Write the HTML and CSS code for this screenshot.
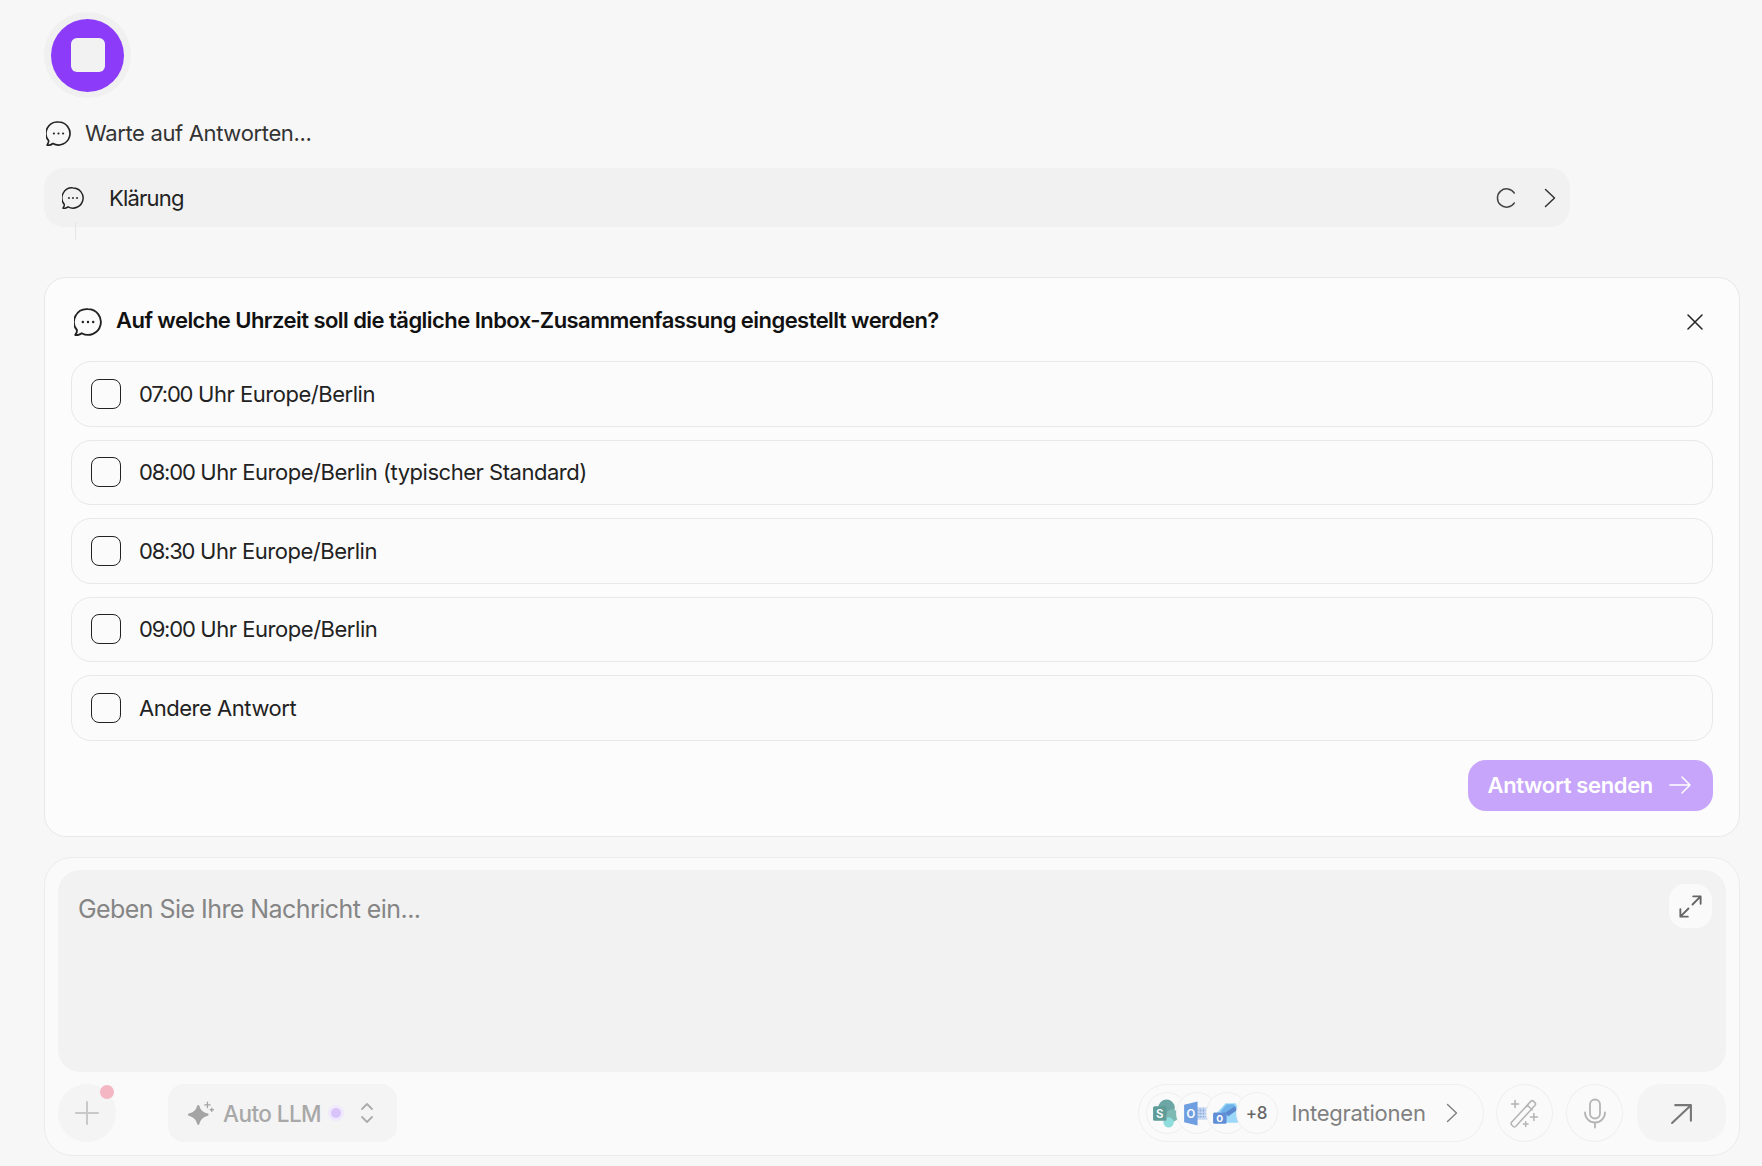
FILE: index.html
```html
<!DOCTYPE html>
<html lang="de">
<head>
<meta charset="utf-8">
<title>Klärung</title>
<link rel="stylesheet" href="styles.css">
</head>
<body>
<svg class="sprite" width="0" height="0" aria-hidden="true">
  <symbol id="chat" viewBox="2.200 2.200 19.600 19.600">
    <path d="M12 3a9 9 0 1 1-4.400 16.850c-1 .8-2.600 1.500-4.200 1.400-.3 0-.4-.4-.2-.6.7-.8 1.100-1.800 1.100-2.900A9 9 0 0 1 12 3Z" fill="none" stroke="currentColor" stroke-width="1.300" stroke-linejoin="round"/>
    <circle cx="8.400" cy="12" r=".85" fill="currentColor"/><circle cx="12" cy="12" r=".85" fill="currentColor"/><circle cx="15.600" cy="12" r=".85" fill="currentColor"/>
  </symbol>
</svg>
<main class="page">
  <div class="stop-ring"><div class="stop-disc"><span class="stop-square"></span></div></div>

  <div class="status">
    <svg class="ic-status"><use href="#chat"/></svg>
    <span>Warte auf Antworten...</span>
  </div>

  <div class="step">
    <svg class="ic-step"><use href="#chat"/></svg>
    <span class="step-label">Klärung</span>
    <svg class="ic-spin" viewBox="0 0 24 24"><path d="M20 6.600A10 10 0 1 0 20 17.400" fill="none" stroke="currentColor" stroke-width="1.600" stroke-linecap="round"/></svg>
    <svg class="ic-chev" viewBox="0 0 12 20"><path d="M1.500 1.500l9 8.500-9 8.500" fill="none" stroke="currentColor" stroke-width="1.500" stroke-linecap="round" stroke-linejoin="round"/></svg>
    <span class="step-line"></span>
  </div>

  <section class="card">
    <header class="card-head">
      <svg class="ic-head"><use href="#chat"/></svg>
      <h2>Auf welche Uhrzeit soll die tägliche Inbox-Zusammenfassung eingestellt werden?</h2>
      <svg class="ic-close" viewBox="0 0 16 16"><path d="M1 1l14 14M15 1L1 15" fill="none" stroke="currentColor" stroke-width="1.500" stroke-linecap="round"/></svg>
    </header>
    <div class="options">
      <label class="option"><span class="box"></span><span><span class="time">07:00</span> Uhr Europe/Berlin</span></label>
      <label class="option"><span class="box"></span><span><span class="time">08:00</span> Uhr Europe/Berlin (typischer Standard)</span></label>
      <label class="option"><span class="box"></span><span><span class="time">08:30</span> Uhr Europe/Berlin</span></label>
      <label class="option"><span class="box"></span><span><span class="time">09:00</span> Uhr Europe/Berlin</span></label>
      <label class="option"><span class="box"></span><span>Andere Antwort</span></label>
    </div>
    <div class="card-foot">
      <button class="send-answer">Antwort senden
        <svg class="ic-arrow" viewBox="0 0 22 18"><path d="M1 9h20M13 1l8 8-8 8" fill="none" stroke="currentColor" stroke-width="1.500" stroke-linecap="round" stroke-linejoin="round"/></svg>
      </button>
    </div>
  </section>

  <section class="composer">
    <div class="input">
      <span class="placeholder">Geben Sie Ihre Nachricht ein...</span>
      <button class="expand">
        <svg viewBox="0 0 20 20"><path d="M12 2.500h5.500V8M17.500 2.500 11.500 8.500M8 17.500H2.500V12M2.500 17.500l6-6" fill="none" stroke="currentColor" stroke-width="1.400" stroke-linecap="round" stroke-linejoin="round"/></svg>
      </button>
    </div>
    <div class="toolbar">
      <button class="plus">
        <svg viewBox="0 0 24 24"><path d="M12 1v22M1 12h22" fill="none" stroke="currentColor" stroke-width="2" stroke-linecap="round"/></svg>
        <span class="plus-dot"></span>
      </button>
      <button class="llm">
        <svg class="ic-spark" viewBox="0 0 25 22"><path d="M9.500 4.500c1 4.200 3 6.600 8.500 8-5.500 1.400-7.500 3.800-8.500 8.500-1-4.700-3-7.100-8.500-8.500 5.500-1.400 7.500-3.800 8.500-8Z" fill="currentColor" stroke="currentColor" stroke-width="2" stroke-linejoin="round"/><path d="M18 1v5M15.500 3.500h5M22 6.500v3M20.500 8h3" stroke="currentColor" stroke-width="1.200" stroke-linecap="round"/></svg>
        <span>Auto LLM</span>
        <span class="llm-dot"></span>
        <svg class="ic-updown" viewBox="0 0 14 24"><path d="M2 8l5-5 5 5M2 16l5 5 5-5" fill="none" stroke="currentColor" stroke-width="1.800" stroke-linecap="round" stroke-linejoin="round"/></svg>
      </button>
      <span class="spacer"></span>
      <button class="integrations">
        <span class="stack">
          <span class="app">
            <svg viewBox="0 0 26 28">
              <circle cx="14" cy="8.500" r="8" fill="#6ba5a5"/><circle cx="19.500" cy="16" r="6" fill="#7fb9b4"/><circle cx="16" cy="22.500" r="5" fill="#8fdcdc"/>
              <rect x="1" y="7" width="13" height="14" rx="1.500" fill="#5f9c98"/>
              <text x="7.500" y="18" class="app-letter">S</text>
            </svg>
          </span>
          <span class="app">
            <svg viewBox="0 0 26 28">
              <rect x="13" y="8" width="12" height="12" fill="#c9daf2"/>
              <path d="M15 11h8M15 14h8M15 17h8M17.500 9v10M20.500 9v10" stroke="#8fb0e0" stroke-width="1" stroke-dasharray="1.500 1"/>
              <path d="M2 5.500 15 2.500v23L2 22.500Z" fill="#6f9fe0"/>
              <text x="8.500" y="18" class="app-letter">O</text>
            </svg>
          </span>
          <span class="app">
            <svg viewBox="0 0 26 28">
              <path d="M5 13 13 4h10l2 6v13H9Z" fill="#9cd8f8"/>
              <path d="M8 12 14 5h7l3 5-8 7Z" fill="#6fb2ea"/>
              <path d="M13 13 22 7l2.500 3.500-9 6Z" fill="#5b88cf"/>
              <rect x="1" y="13" width="13" height="11" rx="1.500" fill="#5f8ed6"/>
              <text x="7.500" y="22" class="app-letter">o</text>
            </svg>
          </span>
          <span class="app app-more">+8</span>
        </span>
        <span class="int-label">Integrationen</span>
        <svg class="ic-int-chev" viewBox="0 0 12 20"><path d="M1.500 1.500l9 8.500-9 8.500" fill="none" stroke="currentColor" stroke-width="1.400" stroke-linecap="round" stroke-linejoin="round"/></svg>
      </button>
      <button class="round">
        <svg class="ic-wand" viewBox="0 0 28 28" fill="none" stroke="currentColor" stroke-width="1.300" stroke-linecap="round" stroke-linejoin="round"><path d="M3 21.500 19.500 3.500a1.500 1.500 0 0 1 2 0l1.500 1.500a1.500 1.500 0 0 1 0 2L6.500 25a1.500 1.500 0 0 1-2 0L3 23.500a1.500 1.500 0 0 1 0-2ZM16.500 7l4 4"/><path d="M6 3v6M3 6h6M22 14v6M19 17h6M15 21v4M13 23h4"/></svg>
      </button>
      <button class="round">
        <svg class="ic-mic" viewBox="0 0 24 30" fill="none" stroke="currentColor" stroke-width="1.800" stroke-linecap="round"><rect x="7" y="1" width="10" height="19" rx="5"/><path d="M2 14a10 10 0 0 0 20 0M12 24v5"/></svg>
      </button>
      <button class="send">
        <svg viewBox="0 0 22 22" fill="none" stroke="currentColor" stroke-width="2" stroke-linecap="round" stroke-linejoin="round"><path d="M2 20 20 3M5 3h15v15"/></svg>
      </button>
    </div>
  </section>
</main>
</body>
</html>
```

FILE: styles.css
```css
* { box-sizing: border-box; }
html, body { margin: 0; height: 100%; }
body {
  background: #f7f7f7;
  font-family: Inter, "Liberation Sans", sans-serif;
  color: #222;
  overflow: hidden;
}
button { font: inherit; border: 0; padding: 0; background: none; color: inherit; }
.sprite { position: absolute; }
.page { display: flex; flex-direction: column; height: 1166px; padding: 12px 22.500px 0 44px; }

.stop-ring { width: 87px; height: 86px; border-radius: 50%; background: #f0f0f0; display: flex; align-items: center; justify-content: center; }
.stop-disc { width: 73px; height: 73px; border-radius: 50%; background: #8c3bf9; display: flex; align-items: center; justify-content: center; }
.stop-square { width: 34px; height: 34px; border-radius: 6px; background: #f2f2f2; }

.status { display: flex; align-items: center; gap: 14px; height: 30px; margin-top: 20px; margin-right: 170px; font-size: 22px; letter-spacing: -.35px; color: #333; }
.ic-status { width: 25px; height: 25px; color: #222; margin-left: 2px; flex: none; }

.step { position: relative; display: flex; align-items: center; height: 59px; margin-top: 20px; margin-right: 170px; padding: 0 14px 0 18px; border-radius: 20px; background: #f1f1f1; font-size: 22px; color: #222; }
.ic-step { width: 22px; height: 22px; flex: none; }
.step-label { margin-left: 25px; flex: 1; letter-spacing: -.8px; }
.ic-spin { width: 22px; height: 22px; color: #444; flex: none; }
.ic-chev { width: 12px; height: 20px; color: #333; margin-left: 26px; flex: none; }
.step-line { position: absolute; left: 31px; top: 54px; width: 1px; height: 18px; background: #e6e6e6; }

.card { margin-top: 50px; height: 560px; padding: 0 26px; border: 1px solid #e8e8e8; border-radius: 22px; background: #fcfcfc; }
.card-head { display: flex; align-items: center; height: 83px; }
.ic-head { width: 28px; height: 28px; margin-left: 3px; color: #222; flex: none; margin-top: 5px; }
.card-head h2 { flex: 1; margin: 0 0 0 14px; font-size: 22px; font-weight: 600; letter-spacing: -.55px; color: #111; }
.ic-close { width: 16px; height: 16px; color: #222; margin-top: 4px; flex: none; margin-right: 10px; }

.options { display: flex; flex-direction: column; gap: 13px; }
.option { display: flex; align-items: center; gap: 18px; height: 65.500px; padding-left: 19px; border: 1px solid #e8e8e8; border-radius: 20px; background: #fbfbfb; font-size: 22px; letter-spacing: -.47px; color: #222; }
.time { letter-spacing: -1.200px; }
.box { width: 30px; height: 30px; border: 1.300px solid #222; border-radius: 8px; flex: none; }

.card-foot { display: flex; justify-content: flex-end; margin-top: 19px; }
.send-answer { display: flex; align-items: center; gap: 16px; height: 51px; width: 245px; padding-left: 20px; border-radius: 18px; background: #c7a5fa; color: #fff; font-size: 22px; font-weight: 600; letter-spacing: -.35px; }
.ic-arrow { width: 22px; height: 18px; flex: none; }

.composer { margin-top: 20px; height: 299px; padding: 12px 12.500px 12px 13px; border: 1px solid #ececec; border-radius: 28px; background: #fafafa; }
.input { display: flex; justify-content: space-between; height: 202px; padding: 14px 14px 0 20px; border-radius: 22px; background: #f2f2f2; font-size: 25px; color: #858585; }
.placeholder { letter-spacing: -.56px; line-height: 50px; }
.expand { display: flex; align-items: center; justify-content: center; width: 43px; height: 44px; border-radius: 16px; background: #fafafa; color: #666; }
.expand svg { width: 27px; height: 27px; }

.toolbar { display: flex; align-items: center; margin-top: 12px; height: 58px; }
.plus { position: relative; display: flex; align-items: center; justify-content: center; width: 58px; height: 58px; border-radius: 50%; background: #f4f4f4; color: #c8c8c8; }
.plus svg { width: 24px; height: 24px; }
.plus-dot { position: absolute; right: 2px; top: 1px; width: 14px; height: 14px; border-radius: 50%; background: #f5b6c3; }

.llm { display: flex; align-items: center; width: 229px; height: 58px; margin-left: 52px; padding-left: 20px; border-radius: 16px; background: #f4f4f4; color: #a8a8a8; font-size: 22.500px; font-weight: 500; letter-spacing: -.55px; }
.ic-spark { width: 27px; height: 24px; color: #a4a4a4; flex: none; }
.llm span:first-of-type { margin-left: 8px; }
.llm-dot { width: 10px; height: 10px; margin-left: 10px; border-radius: 50%; background: #d8c4fb; box-shadow: 0 0 0 3px #f0e8fc; flex: none; }
.ic-updown { width: 14px; height: 24px; margin-left: 19px; color: #acacac; flex: none; }

.spacer { flex: 1; }

.integrations { display: flex; align-items: center; width: 346px; height: 58px; padding-left: 7px; border: 1px solid #efefef; border-radius: 29px; color: #808080; font-size: 22px; }
.stack { display: flex; }
.app { display: flex; align-items: center; justify-content: center; width: 42px; height: 42px; border: 1px solid #efefef; border-radius: 50%; background: #fafafa; flex: none; }
.app + .app { margin-left: -12px; }
.app svg { width: 27px; height: 29px; margin-right: 3px; flex: none; }
.app-letter { font-size: 11px; font-weight: 600; fill: #fff; text-anchor: middle; font-family: Inter, sans-serif; }
.app-more { font-size: 17px; font-weight: 500; color: #666; letter-spacing: -.2px; }
.int-label { margin-left: 14px; letter-spacing: -.25px; }
.ic-int-chev { width: 12px; height: 20px; margin-left: 20px; color: #808080; flex: none; }

.round { display: flex; align-items: center; justify-content: center; width: 57px; height: 58px; margin-left: 12.500px; border: 1px solid #efefef; border-radius: 50%; color: #b4b4b4; }
.round + .round { margin-left: 13px; }
.ic-wand { width: 33px; height: 33px; }
.ic-mic { width: 24px; height: 31px; }
.send { display: flex; align-items: center; justify-content: center; width: 89px; height: 58px; margin-left: 14px; border-radius: 24px; background: #f4f4f4; color: #777; }
.send svg { width: 23px; height: 23px; }
```
